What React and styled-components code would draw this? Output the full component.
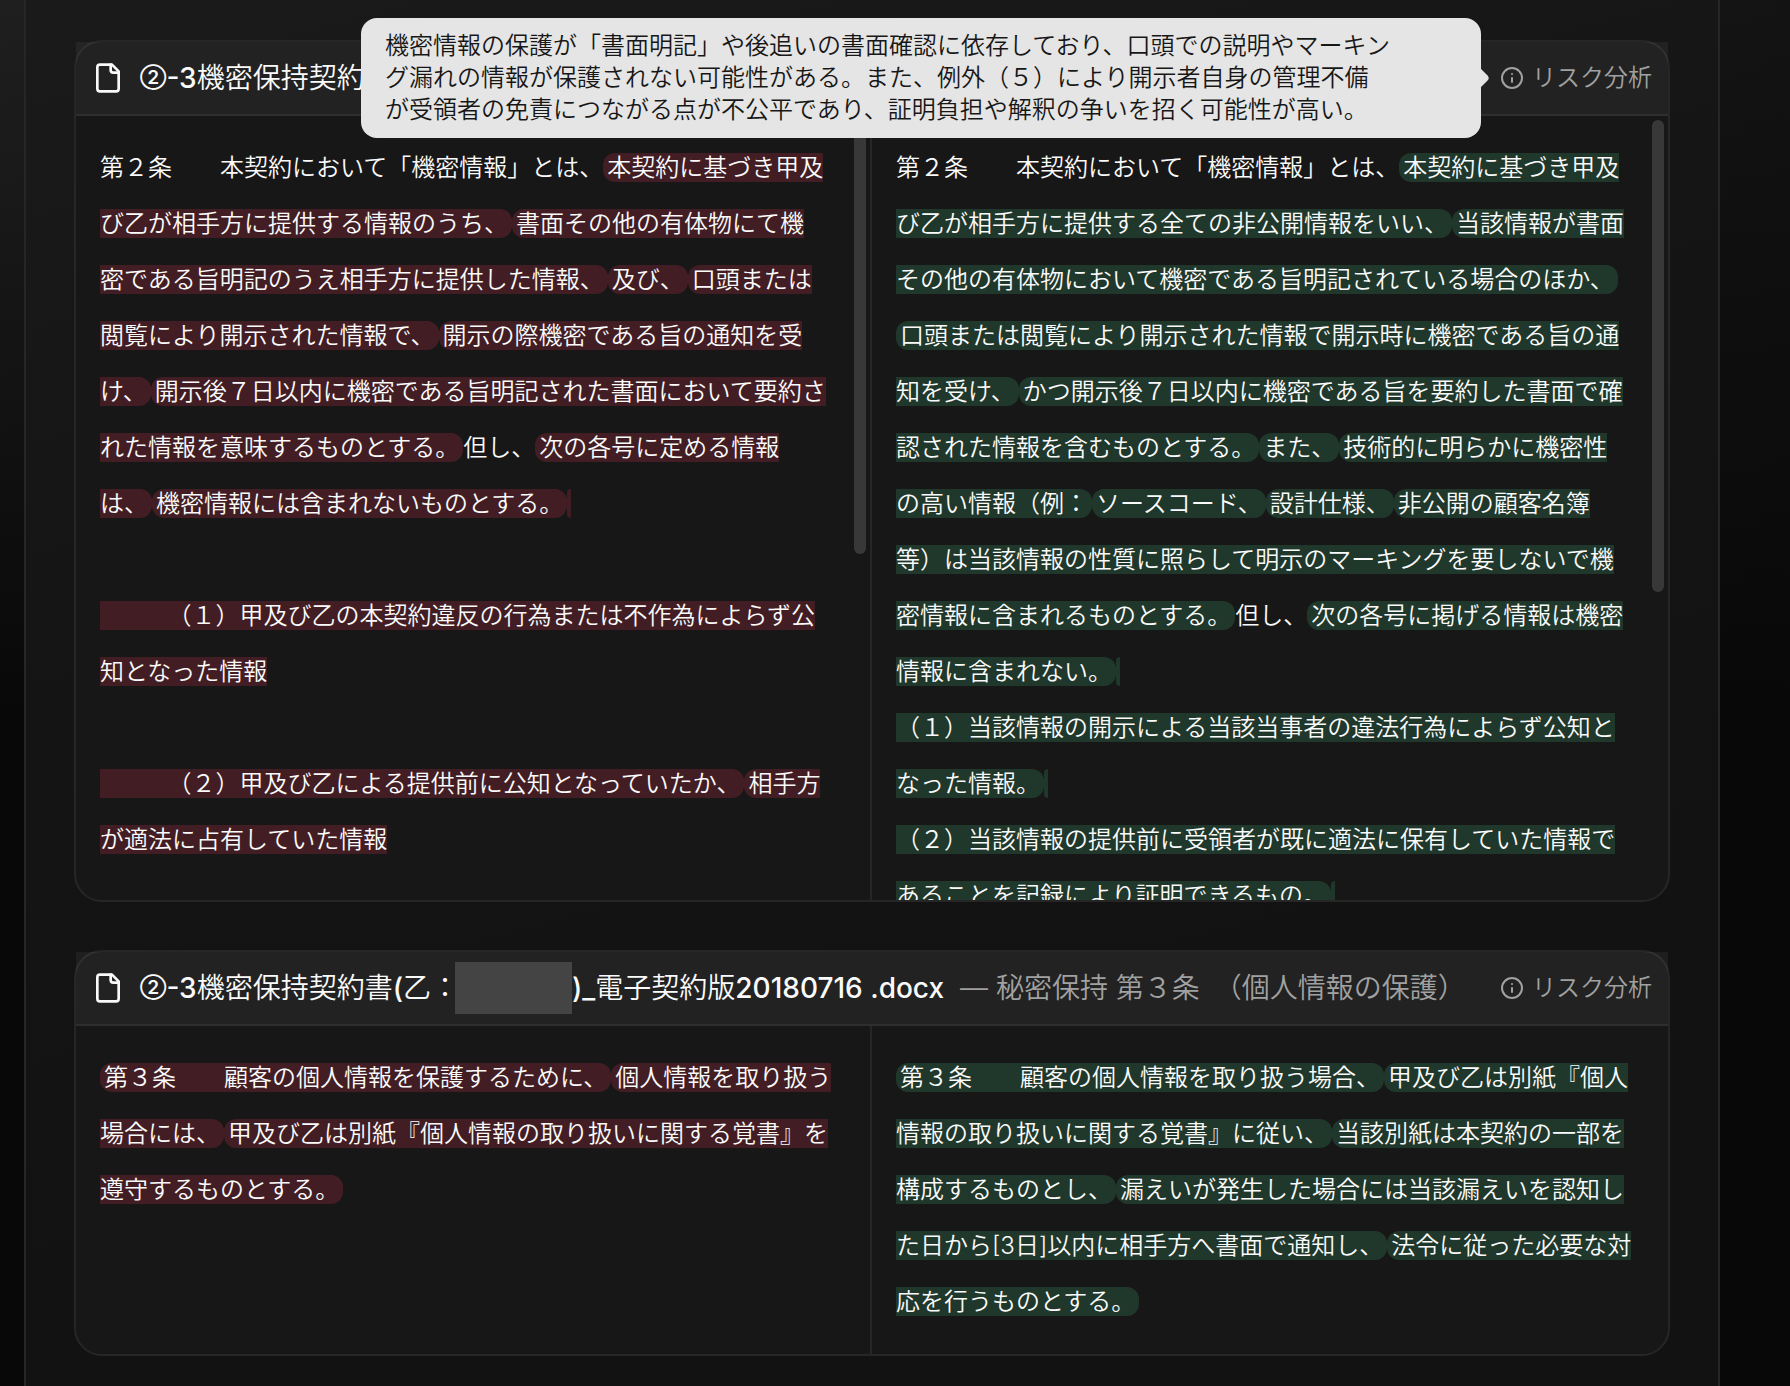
import React from "react";
import styled, { createGlobalStyle } from "styled-components";

const GlobalStyle = createGlobalStyle`
  *, *::before, *::after { box-sizing: border-box; }
  body {
    margin: 0;
    color: #fafafa;
    font-family: Inter, "Noto Sans CJK JP", sans-serif;
    font-weight: 350;
    background: #080808;
  }
`;

const Page = styled.main`
  min-height: 100vh;
  padding: 0 70px 0 24px;
  background:
    linear-gradient(to bottom, transparent, #080808 720px),
    linear-gradient(to right, #1f1f1f, #131313);
`;

const Panel = styled.div`
  display: flex;
  flex-direction: column;
  gap: 48px;
  min-height: 100vh;
  padding: 40px 48px 30px;
  border: solid #262626;
  border-width: 0 2px;
  background: linear-gradient(165deg, #1a1a1a, #151515 35%, #121212 70%);
`;

const Card = styled.section`
  border: 2px solid #262626;
  border-radius: 28px;
  background: #171717;
`;

const CardHeader = styled.header`
  display: flex;
  align-items: center;
  gap: 16px;
  height: 74px;
  padding: 0 16px;
  border-bottom: 2px solid #2e2e2e;
  background: rgba(255, 255, 255, 0.05);
`;

const Title = styled.h2`
  flex: 1;
  display: flex;
  align-items: center;
  margin: 0;
  font-size: 28px;
  line-height: 40px;
  font-weight: 350;
  white-space: pre;
`;

const Latin = styled.span`
  font-weight: 500;
`;

const CircledNumber = styled.span`
  font-size: 19px;
  font-weight: 600;
`;

const Redacted = styled.span`
  width: 117px;
  height: 52px;
  margin-left: -4px;
  background: #444;
`;

const Clause = styled.span`
  margin-left: 16px;
  color: #a1a1a1;
`;

const RiskAnchor = styled.div`
  position: relative;
  flex-shrink: 0;
`;

const RiskButton = styled.button`
  display: flex;
  align-items: center;
  gap: 8px;
  padding: 0;
  border: 0;
  background: none;
  color: #a1a1a1;
  font: inherit;
  font-size: 24px;
  line-height: 32px;
  white-space: nowrap;
  cursor: pointer;
`;

const Tooltip = styled.div`
  position: absolute;
  z-index: 2;
  top: 50%;
  right: calc(100% + 19px);
  width: 1120px;
  padding: 12px 24px;
  border-radius: 16px;
  background: #e5e5e5;
  color: #171717;
  font-size: 24px;
  line-height: 32px;
  white-space: pre-wrap;
  transform: translateY(-50%);

  &::after {
    content: "";
    position: absolute;
    top: 50px;
    right: -5px;
    width: 20px;
    height: 20px;
    border-radius: 4px;
    background: inherit;
    transform: rotate(45deg);
  }
`;

const Columns = styled.div`
  display: grid;
  grid-template-columns: 1fr 1fr;
`;

const Column = styled.div`
  position: relative;
  min-width: 0;

  & + &::before {
    content: "";
    position: absolute;
    inset: 0 auto 0 -2px;
    width: 2px;
    background: #262626;
  }
`;

const Scroller = styled.div`
  max-height: ${(p) => (p.$max ? `${p.$max}px` : "none")};
  padding: 24px;
  overflow-y: auto;
  scrollbar-width: none;
`;

const Text = styled.p`
  margin: 0;
  font-size: 24px;
  line-height: 56px;
  white-space: pre-wrap;
`;

const Removed = styled.del`
  padding: 0 4px;
  border-radius: 12px;
  background: #421e24;
  text-decoration: none;
`;

const Added = styled.ins`
  padding: 0 4px;
  border-radius: 12px;
  background: #20372b;
  text-decoration: none;
`;

const Thumb = styled.div`
  position: absolute;
  top: 4px;
  right: 4px;
  width: 12px;
  height: ${(p) => p.$size}px;
  border-radius: 6px;
  background: #383838;
`;

const FirstThumb = styled(Thumb)`
  right: 6px;
`;

function FileIcon() {
  return (
    <svg width="32" height="32" viewBox="0 0 24 24" fill="none" stroke="currentColor" strokeWidth="2" strokeLinecap="round" strokeLinejoin="round" aria-hidden="true">
      <path d="M15 2H6a2 2 0 0 0-2 2v16a2 2 0 0 0 2 2h12a2 2 0 0 0 2-2V7Z" />
      <path d="M14 2v4a2 2 0 0 0 2 2h4" />
    </svg>
  );
}

function InfoIcon() {
  return (
    <svg width="24" height="24" viewBox="0 0 24 24" fill="none" stroke="currentColor" strokeWidth="2" strokeLinecap="round" strokeLinejoin="round" aria-hidden="true">
      <circle cx="12" cy="12" r="10" />
      <path d="M12 16v-4M12 8h.01" />
    </svg>
  );
}

/* Plain strings are unchanged text, one-item arrays are changed passages. */
const article2 = {
  before: [
    "第２条　　本契約において「機密情報」とは、",
    ["本契約に基づき甲及\nび乙が相手方に提供する情報のうち、"],
    ["書面その他の有体物にて機\n密である旨明記のうえ相手方に提供した情報、"],
    ["及び、"],
    ["口頭または\n閲覧により開示された情報で、"],
    ["開示の際機密である旨の通知を受\nけ、"],
    ["開示後７日以内に機密である旨明記された書面において要約さ\nれた情報を意味するものとする。"],
    "但し、",
    ["次の各号に定める情報\nは、"],
    ["機密情報には含まれないものとする。"],
    ["\n\n          （１）甲及び乙の本契約違反の行為または不作為によらず公\n知となった情報\n\n          （２）甲及び乙による提供前に公知となっていたか、"],
    ["相手方\nが適法に占有していた情報\n\n　"],
  ],
  after: [
    "第２条　　本契約において「機密情報」とは、",
    ["本契約に基づき甲及\nび乙が相手方に提供する全ての非公開情報をいい、"],
    ["当該情報が書面\nその他の有体物において機密である旨明記されている場合のほか、"],
    ["口頭または閲覧により開示された情報で開示時に機密である旨の通\n知を受け、"],
    ["かつ開示後７日以内に機密である旨を要約した書面で確\n認された情報を含むものとする。"],
    ["また、"],
    ["技術的に明らかに機密性\nの高い情報（例："],
    ["ソースコード、"],
    ["設計仕様、"],
    ["非公開の顧客名簿\n等）は当該情報の性質に照らして明示のマーキングを要しないで機\n密情報に含まれるものとする。"],
    "但し、",
    ["次の各号に掲げる情報は機密\n情報に含まれない。"],
    ["\n（１）当該情報の開示による当該当事者の違法行為によらず公知と\nなった情報。"],
    ["\n（２）当該情報の提供前に受領者が既に適法に保有していた情報で\nあることを記録により証明できるもの。"],
    ["\n　"],
  ],
};

const article3 = {
  before: [
    ["第３条　　顧客の個人情報を保護するために、"],
    ["個人情報を取り扱う\n場合には、"],
    ["甲及び乙は別紙『個人情報の取り扱いに関する覚書』を\n遵守するものとする。"],
  ],
  after: [
    ["第３条　　顧客の個人情報を取り扱う場合、"],
    ["甲及び乙は別紙『個人\n情報の取り扱いに関する覚書』に従い、"],
    ["当該別紙は本契約の一部を\n構成するものとし、"],
    ["漏えいが発生した場合には当該漏えいを認知し\nた日から[3日]以内に相手方へ書面で通知し、"],
    ["法令に従った必要な対\n応を行うものとする。"],
  ],
};

const riskText =
  "機密情報の保護が「書面明記」や後追いの書面確認に依存しており、口頭での説明やマーキン\nグ漏れの情報が保護されない可能性がある。また、例外（５）により開示者自身の管理不備\nが受領者の免責につながる点が不公平であり、証明負担や解釈の争いを招く可能性が高い。";

function Diff({ parts, mark: Mark }) {
  return (
    <Text>
      {parts.map((part, i) =>
        typeof part === "string" ? part : <Mark key={i}>{part[0]}</Mark>
      )}
    </Text>
  );
}

function DiffCard({ title, article, tooltip, max, thumbs }) {
  return (
    <Card>
      <CardHeader>
        <FileIcon />
        <Title>
          <CircledNumber>②</CircledNumber>
          <Latin>-3</Latin>機密保持契約書{title}
        </Title>
        <RiskAnchor>
          <RiskButton type="button" aria-describedby={tooltip ? "risk-tip" : undefined}>
            <InfoIcon />
            リスク分析
          </RiskButton>
          {tooltip && <Tooltip role="tooltip" id="risk-tip">{tooltip}</Tooltip>}
        </RiskAnchor>
      </CardHeader>
      <Columns>
        <Column>
          <Scroller $max={max}>
            <Diff parts={article.before} mark={Removed} />
          </Scroller>
          {thumbs && <FirstThumb $size={thumbs[0]} />}
        </Column>
        <Column>
          <Scroller $max={max}>
            <Diff parts={article.after} mark={Added} />
          </Scroller>
          {thumbs && <Thumb $size={thumbs[1]} />}
        </Column>
      </Columns>
    </Card>
  );
}

export default function App() {
  return (
    <>
      <GlobalStyle />
      <Page>
        <Panel>
          <DiffCard
            article={article2}
            tooltip={riskText}
            max={784}
            thumbs={[434, 472]}
          />
          <DiffCard
            title={
              <>
                <Latin>(</Latin>乙：
                <Redacted />
                <Latin>)_</Latin>電子契約版<Latin>20180716 .docx</Latin>
                <Clause>— 秘密保持 第３条　（個人情報の保護）</Clause>
              </>
            }
            article={article3}
          />
        </Panel>
      </Page>
    </>
  );
}
